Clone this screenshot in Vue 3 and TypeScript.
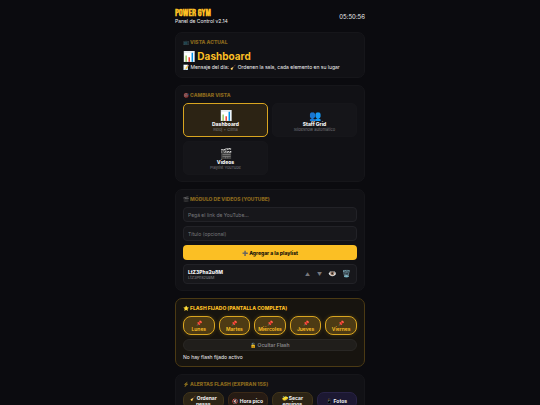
<script setup lang="ts">
import { ref } from 'vue'

interface View { id: string; icon: string; name: string; hint: string }
interface Alert { icon: string; label: string; tone: string }

const views: View[] = [
  { id: 'dashboard', icon: '📊', name: 'Dashboard', hint: 'Reloj + Clima' },
  { id: 'staff', icon: '👥', name: 'Staff Grid', hint: 'Slideshow automático' },
  { id: 'videos', icon: '🎬', name: 'Videos', hint: 'Playlist YouTube' },
]
const days: string[] = ['Lunes', 'Martes', 'Miércoles', 'Jueves', 'Viernes']
const alerts: Alert[] = [
  { icon: '🧹', label: 'Ordenar pesas', tone: 'gold' },
  { icon: '🔇', label: 'Hora pico', tone: 'red' },
  { icon: '🧽', label: 'Secar equipos', tone: 'gold' },
  { icon: '📱', label: 'Fotos', tone: 'violet' },
]
const current = ref('dashboard')
const link = ref('')
const title = ref('')
</script>

<template>
  <main class="panel">
    <header class="top">
      <div>
        <h1 class="brand">POWER GYM</h1>
        <p class="version">Panel de Control v2.14</p>
      </div>
      <time class="clock">05:50:56</time>
    </header>

    <section class="card">
      <h2 class="label">📺 VISTA ACTUAL</h2>
      <p class="current">📊 Dashboard</p>
      <p class="message">📝 Mensaje del día: 🧹 Ordenen la sala, cada elemento en su lugar</p>
    </section>

    <section class="card">
      <h2 class="label">🎯 CAMBIAR VISTA</h2>
      <div class="views">
        <button
          v-for="v in views"
          :key="v.id"
          type="button"
          class="view"
          :class="{ active: current === v.id }"
          @click="current = v.id"
        >
          <span class="view-icon">{{ v.icon }}</span>
          <span class="view-name">{{ v.name }}</span>
          <span class="view-hint">{{ v.hint }}</span>
        </button>
      </div>
    </section>

    <section class="card">
      <h2 class="label">🎬 MÓDULO DE VIDEOS (YOUTUBE)</h2>
      <form class="form" @submit.prevent>
        <input v-model="link" class="field" type="text" aria-label="Link de YouTube" placeholder="Pegá el link de YouTube...">
        <input v-model="title" class="field" type="text" aria-label="Título" placeholder="Título (opcional)">
        <button type="submit" class="add">➕ Agregar a la playlist</button>
      </form>
      <div class="video">
        <div class="video-text">
          <span class="video-name">LtZ3Phs2u8M</span>
          <span class="video-id">LtZ3Phs2u8M</span>
        </div>
        <button type="button" class="tool arrow" aria-label="Subir">▲</button>
        <button type="button" class="tool arrow" aria-label="Bajar">▼</button>
        <button type="button" class="tool" aria-label="Ver">👁️</button>
        <button type="button" class="tool" aria-label="Eliminar">🗑️</button>
      </div>
    </section>

    <section class="card flash">
      <h2 class="label bright">⭐ FLASH FIJADO (PANTALLA COMPLETA)</h2>
      <div class="days">
        <button v-for="d in days" :key="d" type="button" class="day">
          <span>📌</span>
          <span>{{ d }}</span>
        </button>
      </div>
      <button type="button" class="hide">🔓 Ocultar Flash</button>
      <p class="status">No hay flash fijado activo</p>
    </section>

    <section class="card">
      <h2 class="label">⚡ ALERTAS FLASH (EXPIRAN 15S)</h2>
      <div class="alerts">
        <button v-for="a in alerts" :key="a.label" type="button" class="alert" :class="a.tone">
          {{ a.icon }} {{ a.label }}
        </button>
      </div>
    </section>
  </main>
</template>

<style>
html,
body {
  height: 100%;
  background: #0b0b0f;
}
body {
  overflow: hidden;
}
</style>

<style scoped>
.panel {
  box-sizing: border-box;
  display: flex;
  flex-direction: column;
  gap: 7px;
  width: 100%;
  max-width: 190px;
  margin: 0 auto;
  padding-top: 8px;
  font-family: Inter, "Liberation Sans", sans-serif;
  font-size: 5px;
  line-height: 6px;
  color: #f1f1f3;
}
h1,
h2,
p {
  margin: 0;
}
button,
input {
  box-sizing: border-box;
  margin: 0;
  padding: 0;
  border: 0;
  font: inherit;
  color: inherit;
}
button {
  cursor: pointer;
}
.top {
  display: flex;
  align-items: center;
  justify-content: space-between;
}
.brand {
  font-family: "Bebas Neue", "Liberation Sans Narrow", "Roboto Condensed", "Open Sans Condensed", "Liberation Sans", sans-serif;
  font-size: 10px;
  line-height: 10px;
  font-weight: 700;
  color: #fbbf24;
}
.version {
  line-height: 7px;
}
.clock {
  font-size: 6px;
}
.card {
  box-sizing: border-box;
  padding: 6px 7px;
  border: 1px solid #16161a;
  border-radius: 7px;
  background: #111115;
}
.label {
  margin-bottom: 5px;
  font-size: 5px;
  line-height: 6px;
  font-weight: 800;
  color: #fbbf24;
  opacity: 0.5;
}
.label.bright {
  opacity: 1;
}
.current {
  font-size: 10px;
  line-height: 13px;
  font-weight: 700;
  color: #fbbf24;
}
.message {
  margin-top: 1px;
  line-height: 7px;
}
.views {
  display: grid;
  grid-template-columns: 1fr 1fr;
  gap: 4px;
}
.view {
  display: flex;
  flex-direction: column;
  align-items: center;
  justify-content: center;
  height: 34px;
  border: 1px solid #16161a;
  border-radius: 5px;
  background: #151519;
}
.view.active {
  border-color: #d9a520;
  background: #2c2314;
}
.view-icon {
  font-size: 10px;
  line-height: 12px;
}
.view-name {
  font-weight: 800;
}
.view-hint {
  font-size: 4px;
  line-height: 5px;
  color: #77777c;
}
.form {
  display: flex;
  flex-direction: column;
  gap: 4px;
}
.field {
  width: 100%;
  height: 15px;
  padding: 0 4px;
  border: 1px solid #222227;
  border-radius: 4px;
  background: #17171b;
}
.field::placeholder {
  color: #77777c;
  opacity: 1;
}
.add {
  height: 15px;
  border-radius: 4px;
  background: #fbbf24;
  font-weight: 800;
  color: #17130a;
}
.video {
  display: flex;
  align-items: center;
  gap: 1px;
  height: 20px;
  box-sizing: border-box;
  margin-top: 4px;
  padding: 0 3px 0 4px;
  border: 1px solid #222227;
  border-radius: 4px;
  background: #17171b;
}
.video-text {
  display: flex;
  flex: 1;
  flex-direction: column;
}
.video-name {
  font-weight: 800;
}
.video-id {
  font-size: 4px;
  line-height: 5px;
  color: #88888d;
}
.tool {
  width: 13px;
  height: 13px;
  background: none;
  font-size: 7px;
}
.arrow {
  width: 11px;
  font-size: 5px;
  color: #77777c;
}
.flash {
  border-color: #4b3a14;
  background: #17140f;
}
.days {
  display: grid;
  grid-template-columns: repeat(5, 1fr);
  gap: 4px;
}
.day {
  display: flex;
  flex-direction: column;
  align-items: center;
  justify-content: center;
  height: 19px;
  border: 1px solid #d9a520;
  border-radius: 8px;
  background: #4d3b14;
  box-shadow: 0 0 4px #fbbf2433;
  font-weight: 600;
  color: #fbbf24;
}
.hide {
  width: 100%;
  height: 12px;
  margin-top: 4px;
  border: 1px solid #292724;
  border-radius: 6px;
  background: #201e1b;
  font-weight: 600;
  color: #88878a;
}
.status {
  margin-top: 3px;
}
.alerts {
  display: grid;
  grid-template-columns: repeat(4, 1fr);
  gap: 4px;
}
.alert {
  height: 17px;
  padding: 0 3px;
  border: 1px solid;
  border-radius: 7px;
  font-weight: 700;
}
.gold {
  border-color: #41351a;
  background: #2c2415;
}
.red {
  border-color: #3b2918;
  background: #261b14;
}
.violet {
  border-color: #292346;
  background: #1c1832;
}
</style>
